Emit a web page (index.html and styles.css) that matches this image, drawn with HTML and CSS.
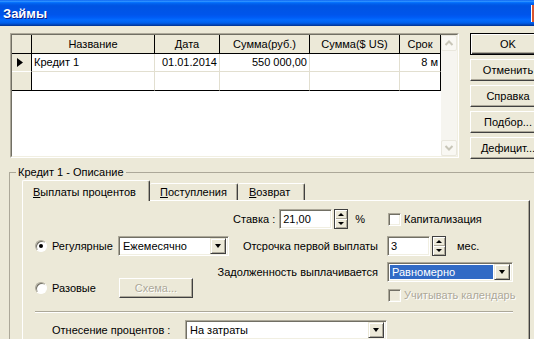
FILE: index.html
```html
<!DOCTYPE html>
<html>
<head>
    <title>Займы</title>
    <meta charset="utf-8">
    <link rel="stylesheet" href="styles.css">
</head>
<body>
<div class="window">
    <div class="titlebar">
        <span class="title">Займы</span>
        <span class="close-sliver"></span>
    </div>

    <div class="top">
        <div class="grid">
            <div class="grid-frame">
                <div class="grid-body">
                    <table class="grid-table">
                        <tr>
                            <th class="ind"></th>
                            <th class="c-name">Название</th>
                            <th class="c-date">Дата</th>
                            <th class="c-rub">Сумма(руб.)</th>
                            <th class="c-usd">Сумма($ US)</th>
                            <th class="c-term">Срок</th>
                        </tr>
                        <tr>
                            <td class="ind"><svg class="pointer" width="6" height="9" viewBox="0 0 6 9"><polygon points="0,0 6,4.5 0,9" fill="#000"/></svg></td>
                            <td>Кредит 1</td>
                            <td class="num">01.01.2014</td>
                            <td class="num">550 000,00</td>
                            <td class="num"></td>
                            <td class="num c-term">8 м</td>
                        </tr>
                        <tr class="last">
                            <td class="ind"></td>
                            <td></td>
                            <td></td>
                            <td></td>
                            <td></td>
                            <td class="c-term"></td>
                        </tr>
                    </table>
                </div>
                <div class="vscroll">
                    <div class="sb-btn">
                        <svg width="14" height="14" viewBox="0 0 14 14"><polyline points="3.5,9 7,5.5 10.5,9" fill="none" stroke="#C8C6B8" stroke-width="2"/></svg>
                    </div>
                    <div class="sb-track"></div>
                    <div class="sb-btn">
                        <svg width="14" height="14" viewBox="0 0 14 14"><polyline points="3.5,5 7,8.5 10.5,5" fill="none" stroke="#C8C6B8" stroke-width="2"/></svg>
                    </div>
                </div>
            </div>
        </div>

        <div class="buttons">
            <div class="btn default">OK</div>
            <div class="btn">Отменить</div>
            <div class="btn">Справка</div>
            <div class="btn">Подбор...</div>
            <div class="btn">Дефицит...</div>
        </div>
    </div>

    <fieldset class="group">
        <legend>Кредит 1 - Описание</legend>
        <div class="tabs">
            <div class="tab active"><u>В</u>ыплаты процентов</div>
            <div class="tab tab-income"><u>П</u>оступления</div>
            <div class="tab tab-return"><u>В</u>озврат</div>
        </div>
        <div class="page">
            <div class="row">
                <div class="label-cell rate-cell">
                    <span>Ставка :</span>
                    <span class="field rate-edit">21,00</span>
                    <span class="spin"><span class="spin-half"><i class="arr-up"></i></span><span class="spin-half"><i class="arr-down"></i></span></span>
                    <span class="unit">%</span>
                </div>
                <div class="ctrl-cell">
                    <span class="check"></span>
                    <span class="check-label">Капитализация</span>
                </div>
            </div>

            <div class="row row-regular">
                <div class="left left-regular">
                    <span class="radio checked"></span>
                    <span class="radio-label">Регулярные</span>
                    <span class="field combo period-combo">
                        <span class="combo-text">Ежемесячно</span>
                        <span class="drop"><i class="arr-down"></i></span>
                    </span>
                </div>
                <div class="label-cell">Отсрочка первой выплаты</div>
                <div class="ctrl-cell">
                    <span class="field delay-edit">3</span>
                    <span class="spin"><span class="spin-half"><i class="arr-up"></i></span><span class="spin-half"><i class="arr-down"></i></span></span>
                    <span class="unit months">мес.</span>
                </div>
            </div>

            <div class="row row-pair">
                <div class="left left-once">
                    <span class="radio"></span>
                    <span class="radio-label">Разовые</span>
                    <span class="btn disabled scheme-btn">Схема...</span>
                </div>
                <div class="pair-right">
                    <div class="row">
                        <div class="label-cell">Задолженность выплачивается</div>
                        <div class="ctrl-cell">
                            <span class="field combo debt-combo">
                                <span class="combo-text selected">Равномерно</span>
                                <span class="drop"><i class="arr-down"></i></span>
                            </span>
                        </div>
                    </div>
                    <div class="row row-calendar">
                        <div class="label-cell"></div>
                        <div class="ctrl-cell">
                            <span class="check disabled"></span>
                            <span class="check-label grayed">Учитывать календарь</span>
                        </div>
                    </div>
                </div>
            </div>

            <div class="separator"></div>

            <div class="row row-charge">
                <span class="charge-label">Отнесение процентов :</span>
                <span class="field combo charge-combo">
                    <span class="combo-text">На затраты</span>
                    <span class="drop"><i class="arr-down"></i></span>
                </span>
            </div>
        </div>
    </fieldset>
</div>
</body>
</html>
```

FILE: styles.css
```css
body {
    margin: 0;
    font-family: "Liberation Sans", Arial, sans-serif;
    font-size: 11px;
    color: #000;
    background-color: #ECE9D8;
}
.window {
    width: 534px;
    height: 339px;
    overflow: hidden;
    background-color: #ECE9D8;
}

/* title bar */
.titlebar {
    display: flex;
    align-items: center;
    height: 26px;
    background: linear-gradient(to bottom, #0058EE 0%, #3593FF 4%, #288EFF 6%, #127DFF 8%, #036FFC 10%, #0262EE 14%, #0057E5 20%, #0054E3 24%, #0055EB 56%, #005BF5 66%, #026AFE 76%, #0062EF 86%, #0052D6 92%, #0040AB 96%, #003092 100%);
}
.title {
    padding-left: 3px;
    color: #fff;
    font-size: 13px;
    font-weight: bold;
    text-shadow: 1px 1px 0 #0A1E8C;
}
.close-sliver {
    margin-left: auto;
    align-self: flex-start;
    margin-top: 5px;
    width: 2px;
    height: 17px;
    border-left: 1px solid #fff;
    background-color: #D9552F;
}

/* top part: grid + buttons */
.top {
    display: flex;
    align-items: flex-start;
    padding: 7px 0 0 10px;
}
.grid {
    width: 449px;
    height: 125px;
    box-sizing: border-box;
    border: 1px solid;
    border-color: #ACA899 #fff #fff #ACA899;
}
.grid-frame {
    display: flex;
    height: 100%;
    box-sizing: border-box;
    border: 1px solid;
    border-color: #716F64 #F1EFE2 #F1EFE2 #716F64;
}
.grid-body {
    flex: 1;
    background-color: #fff;
}
.grid-table {
    table-layout: fixed;
    border-collapse: separate;
    border-spacing: 0;
    width: 429px;
}
.grid-table th,
.grid-table td {
    box-sizing: border-box;
    height: 18px;
    padding: 0 2px;
    border-right: 1px solid #E2DFD0;
    border-bottom: 1px solid #E2DFD0;
    white-space: nowrap;
    overflow: hidden;
    font-weight: normal;
    line-height: 13px;
}
.grid-table th {
    height: 19px;
    background-color: #ECE9D8;
    border-right-color: #000;
    border-bottom-color: #000;
    text-align: center;
}
.grid-table .ind {
    width: 20px;
    padding: 0 0 0 5px;
    background-color: #ECE9D8;
    border-right-color: #000;
    border-bottom-color: #fff;
}
.grid-table th.ind {
    border-bottom-color: #000;
}
.pointer {
    display: block;
}
.c-name { width: 123px; }
.c-date { width: 65px; }
.c-rub { width: 90px; }
.c-usd { width: 90px; }
.grid-table .c-term {
    width: 41px;
    border-right-color: #000;
}
.grid-table td.num {
    text-align: right;
}
.grid-table tr.last td {
    height: 19px;
    border-bottom-color: #000;
}
.vscroll {
    width: 16px;
    display: flex;
    flex-direction: column;
    background-color: #F6F5F0;
}
.sb-btn {
    width: 16px;
    height: 16px;
    box-sizing: border-box;
    display: flex;
    align-items: center;
    justify-content: center;
    border: 1px solid #E9E7DD;
    border-radius: 2px;
    background-color: #F9F8F3;
}
.sb-track {
    flex: 1;
}

.buttons {
    display: flex;
    flex-direction: column;
    gap: 4px;
    margin-left: 11px;
}
.btn {
    width: 76px;
    height: 22px;
    box-sizing: border-box;
    display: flex;
    align-items: center;
    justify-content: center;
    border: 1px solid;
    border-color: #fff #404040 #404040 #fff;
    box-shadow: inset -1px -1px 0 #ACA899;
    background-color: #ECE9D8;
    white-space: nowrap;
}
.btn.default {
    border-color: #000;
    box-shadow: inset 1px 1px 0 #fff, inset -1px -1px 0 #404040, inset -2px -2px 0 #ACA899;
}
.btn.disabled {
    color: #ACA899;
    text-shadow: 1px 1px 0 #fff;
}

/* group box with tabs */
.group {
    margin: 7px 0 0 9px;
    padding: 1px 0 0 0;
    width: 540px;
    border: 1px solid #ACA899;
    min-width: 0;
}
.group legend {
    margin-left: 6px;
    padding: 0 2px;
    line-height: 13px;
    background-color: #ECE9D8;
}
.tabs {
    display: flex;
    align-items: flex-end;
    height: 20px;
    margin-left: 12px;
}
.tab {
    box-sizing: border-box;
    height: 17px;
    padding: 2px 0 0 10px;
    line-height: 13px;
    border-top: 1px solid #fff;
    border-right: 1px solid #404040;
    box-shadow: inset -1px 0 0 #ACA899;
    border-radius: 2px 2px 0 0;
    white-space: nowrap;
}
.tab.active {
    position: relative;
    z-index: 1;
    width: 128px;
    height: 21px;
    margin-bottom: -1px;
    padding-top: 5px;
    border-left: 1px solid #fff;
    background-color: #ECE9D8;
}
.tab-income { width: 88px; }
.tab-return { width: 67px; padding-left: 11px; }
.page {
    box-sizing: border-box;
    width: 508px;
    height: 160px;
    margin-left: 12px;
    padding: 8px 0 0 12px;
    border: 1px solid;
    border-color: #fff #404040 #404040 #fff;
    box-shadow: inset -1px 0 0 #ACA899;
}

/* form rows */
.row {
    display: flex;
    align-items: center;
    height: 20px;
    margin-bottom: 7px;
    white-space: nowrap;
}
.row-regular {
    margin-bottom: 6px;
}
.row-pair {
    height: auto;
    align-items: flex-end;
    margin-bottom: 0;
}
.row-pair .row {
    margin-bottom: 0;
}
.row-pair .row-calendar {
    height: 16px;
    margin-top: 5px;
}
.pair-right {
    flex: 1;
    display: flex;
    flex-direction: column;
}
.left {
    display: flex;
    align-items: center;
}
.left-regular { width: 205px; }
.left-once {
    width: 170px;
    margin-bottom: 5px;
}
.label-cell {
    flex: 1;
    display: flex;
    align-items: center;
    justify-content: flex-end;
    margin-right: 9px;
}
.rate-cell {
    padding-right: 13px;
}
.ctrl-cell {
    width: 142px;
    display: flex;
    align-items: center;
}

.field {
    box-sizing: border-box;
    height: 20px;
    display: flex;
    align-items: center;
    padding-left: 3px;
    background-color: #fff;
    border: 1px solid;
    border-color: #ACA899 #fff #fff #ACA899;
    box-shadow: inset 1px 1px 0 #716F64, inset -1px -1px 0 #F1EFE2;
}
.rate-edit {
    width: 53px;
    margin-left: 4px;
}
.delay-edit {
    width: 43px;
}
.spin {
    box-sizing: border-box;
    width: 14px;
    height: 20px;
    margin-left: 2px;
    display: flex;
    flex-direction: column;
    border: 1px solid #404040;
}
.spin-half {
    flex: 1;
    display: flex;
    align-items: center;
    justify-content: center;
    background-color: #ECE9D8;
    box-shadow: inset 1px 1px 0 #fff, inset -1px -1px 0 #ACA899;
}
.arr-up,
.arr-down {
    display: block;
    width: 0;
    height: 0;
    border-left: 3px solid transparent;
    border-right: 3px solid transparent;
}
.arr-up { border-bottom: 3px solid #000; }
.arr-down { border-top: 3px solid #000; }
.drop .arr-down {
    border-left-width: 3.5px;
    border-right-width: 3.5px;
    border-top-width: 4px;
}
.unit {
    margin-left: 7px;
}
.months {
    margin-left: 11px;
}

.combo {
    padding: 1px 2px 1px 1px;
}
.combo-text {
    flex: 1;
    align-self: stretch;
    display: flex;
    align-items: center;
    padding-left: 2px;
    margin: 1px;
}
.combo-text.selected {
    background-color: #316AC5;
    color: #fff;
}
.drop {
    box-sizing: border-box;
    width: 16px;
    height: 16px;
    display: flex;
    align-items: center;
    justify-content: center;
    border: 1px solid;
    border-color: #ECE9D8 #404040 #404040 #ECE9D8;
    box-shadow: inset 1px 1px 0 #fff, inset -1px -1px 0 #ACA899;
    background-color: #ECE9D8;
}
.period-combo {
    width: 111px;
}
.debt-combo {
    width: 126px;
}
.charge-combo {
    width: 202px;
}

.radio {
    position: relative;
    box-sizing: border-box;
    width: 12px;
    height: 12px;
    border-radius: 50%;
    border: 1px solid;
    border-color: #ACA899 #fff #fff #ACA899;
    box-shadow: inset 1px 1px 0 #716F64;
    background-color: #fff;
}
.radio.checked::after {
    content: "";
    position: absolute;
    left: 3px;
    top: 3px;
    width: 4px;
    height: 4px;
    border-radius: 50%;
    background-color: #000;
}
.radio-label {
    width: 66px;
    margin-left: 5px;
}
.left-once .radio-label {
    width: 67px;
}
.scheme-btn {
    width: 74px;
    height: 20px;
}

.check {
    box-sizing: border-box;
    width: 13px;
    height: 13px;
    margin-left: 1px;
    border: 1px solid;
    border-color: #ACA899 #fff #fff #ACA899;
    box-shadow: inset 1px 1px 0 #716F64, inset -1px -1px 0 #F1EFE2;
    background-color: #fff;
}
.check.disabled {
    background-color: #ECE9D8;
}
.check-label {
    margin-left: 3px;
}
.grayed {
    color: #ACA899;
    text-shadow: 1px 1px 0 #fff;
}

.separator {
    width: 478px;
    height: 0;
    margin-top: 8px;
    border-top: 1px solid #ACA899;
    border-bottom: 1px solid #fff;
}
.row-charge {
    margin-top: 7px;
}
.charge-label {
    width: 133px;
    padding-left: 17px;
}
```
